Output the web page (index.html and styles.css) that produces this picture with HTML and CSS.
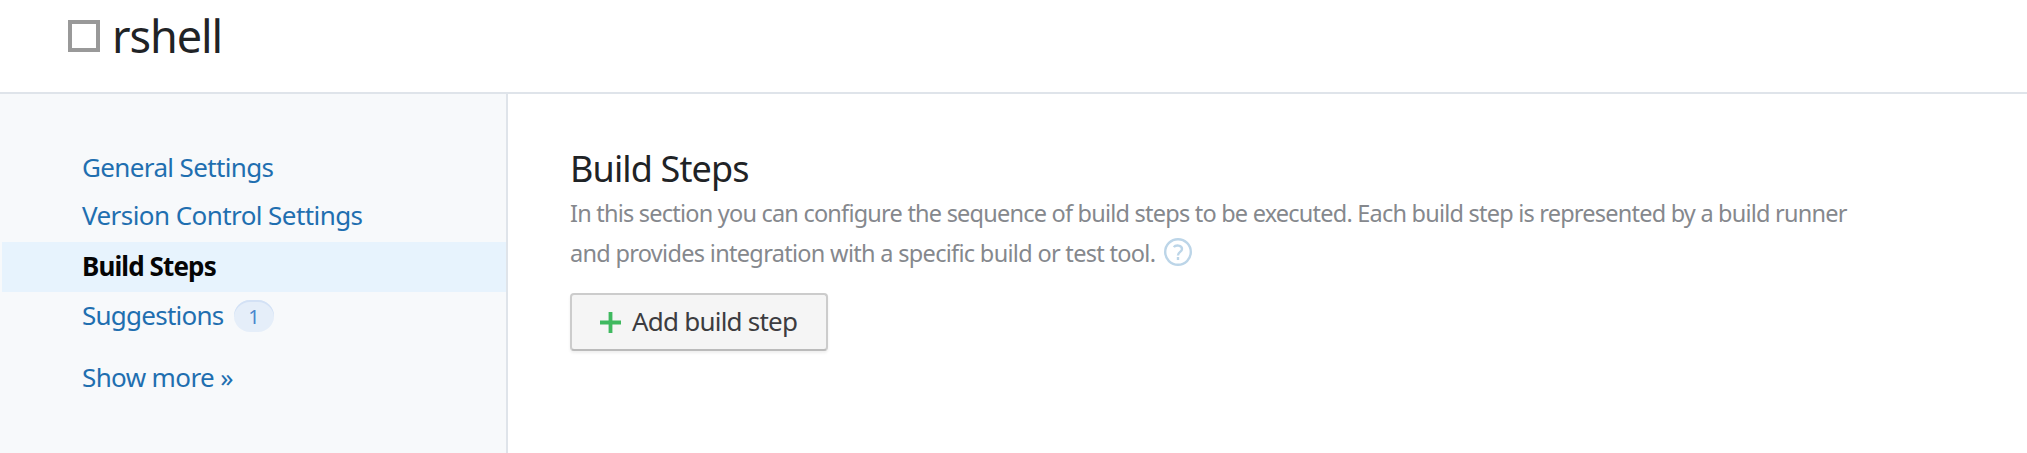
FILE: index.html
```html
<!DOCTYPE html>
<html lang="en">
<head>
<meta charset="utf-8">
<title>rshell</title>
<link rel="stylesheet" href="styles.css">
</head>
<body>
<header class="header"><span class="project-icon"></span><h1 class="title">rshell</h1></header>
<div class="layout">
<nav class="sidebar">
<a class="item"><span class="label">General Settings</span></a>
<a class="item"><span class="label vcs">Version Control Settings</span></a>
<a class="item active"><span class="label">Build Steps</span></a>
<a class="item"><span class="label suggestions">Suggestions</span><span class="badge">1</span></a>
<a class="item more"><span class="label">Show more »</span></a>
</nav>
<main class="content">
<h2 class="heading">Build Steps</h2>
<p class="desc"><span class="line1">In this section you can configure the sequence of build steps to be executed. Each build step is represented by a build runner</span><br><span class="line2">and provides integration with a specific build or test tool.</span><svg class="help" viewBox="0 0 28 28"><circle cx="14" cy="14" r="12.8"/><path d="M9.8 9.2c1.6-2.4 8.2-2.5 8.2 1.7 0 3-4 3-4 6.5M14 19v3"/></svg></p>
<button class="add"><svg class="plus" viewBox="0 0 22 22"><path d="M11 0v22M0 11h22"/></svg><span class="add-label">Add build step</span></button>
</main>
</div>
</body>
</html>
```
FILE: styles.css
```css
* { box-sizing: border-box; }
body { margin: 0; height: 453px; overflow: hidden; background: #fff; font-family: "Noto Sans", sans-serif; color: #1f2326; display: flex; flex-direction: column; }
.header { height: 94px; flex: none; border-bottom: 2px solid #dfe4ea; display: flex; align-items: flex-start; padding-left: 68px; }
.project-icon { width: 32px; height: 32px; border: 4px solid #999; margin-top: 20px; }
.title { margin: 4px 0 0 12px; font-size: 45px; line-height: 64px; font-weight: 400; letter-spacing: -1.1px; }
.layout { flex: 1; min-height: 0; display: flex; }
.sidebar { width: 508px; background: #f7f9fb; border-right: 2px solid #dfe4ea; padding: 50px 0 0 2px; }
.item { height: 49px; display: flex; align-items: center; padding-left: 80px; font-size: 26px; letter-spacing: -.63px; color: #1f6fb0; white-space: nowrap; }
.label { padding-bottom: 3px; }
.vcs { padding-bottom: 5px; letter-spacing: -.57px; }
.active { height: 50px; background: #e7f3fd; color: #050505; font-weight: 700; letter-spacing: -.88px; }
.suggestions { width: 142px; letter-spacing: -.75px; }
.more { margin-top: 13px; }
.badge { margin-left: 10px; width: 40px; height: 32px; margin-bottom: 1px; border-radius: 16px; background: #e5eef9; box-shadow: inset 0 2px 0 #d3e1f5; color: #4a86cd; font-size: 20px; letter-spacing: 0; display: flex; align-items: center; justify-content: center; }
.content { flex: 1; padding: 51px 0 0 62px; }
.heading { margin: 0; font-size: 36px; line-height: 48px; font-weight: 400; letter-spacing: -.87px; }
.desc { margin: 0; font-size: 23.5px; line-height: 40px; color: #85888d; white-space: nowrap; }
.line1 { letter-spacing: -.78px; }
.line2 { letter-spacing: -.69px; }
.help { width: 28px; height: 28px; margin-left: 9px; vertical-align: -4px; fill: none; stroke: #bcd5e8; stroke-width: 2.4; }
.add { margin-top: 20px; width: 258px; height: 58px; border: 2px solid #ccc; border-bottom-color: #bbb; border-radius: 4px; background: #f5f5f5; box-shadow: 0 2px 3px #0001; font: 26px "Noto Sans", sans-serif; letter-spacing: -.78px; color: #3c3c40; display: flex; align-items: center; padding: 0 0 0 28px; white-space: nowrap; }
.plus { width: 21px; height: 21px; stroke: #3fb95f; stroke-width: 4; margin-right: 11px; }
.add-label { padding-bottom: 2px; }
```
